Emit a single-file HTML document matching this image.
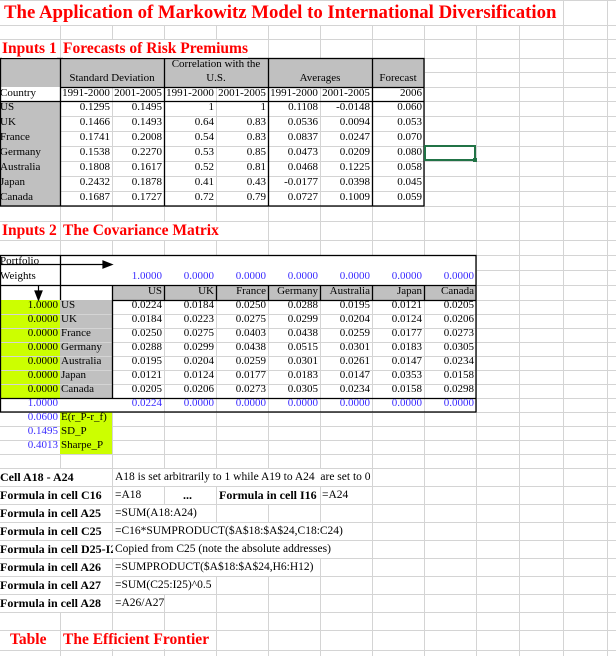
<!DOCTYPE html>
<html><head><meta charset="utf-8"><style>
body{margin:0;width:616px;height:656px;background:#fff;position:relative;overflow:hidden}
.c{position:absolute;height:15px;line-height:15px;font:11px "Liberation Serif",serif;white-space:nowrap;overflow:hidden;color:#000}
.r{text-align:right;padding-right:2px;box-sizing:border-box}
.m{text-align:center}
.l{padding-left:1px}
.b{color:#3a2bff}
.t{position:absolute;font:bold 15.5px "Liberation Serif",serif;color:#f00;white-space:nowrap;background:#fff;height:18px;line-height:18px}
.f{position:absolute;font:bold 12px "Liberation Serif",serif;white-space:nowrap;line-height:17px;height:17px;background:#fff}
.n{position:absolute;font:11.5px "Liberation Serif",serif;white-space:nowrap;line-height:17px;height:17px;background:#fff}
</style></head><body>
<svg width="616" height="656" style="position:absolute;left:0;top:0">
<g stroke="#d4d4d4" stroke-width="1">
<line x1="0" y1="0.5" x2="616" y2="0.5"/>
<path d="M60.5 25V656M112.5 25V656M164.5 25V656M216.5 25V656M268.5 25V656M320.5 25V656M372.5 25V656M424.5 25V656M476.5 25V656M519.5 25V656M563.5 0V656M607.5 0V656"/>
<path d="M0 25.5H616M0 39.5H616M0 58.5H616M0 72.5H616M0 87.5H616M0 101.5H616M0 116.5H616M0 131.5H616M0 146.5H616M0 161.5H616M0 176.5H616M0 191.5H616M0 206.5H616M0 221.5H616M0 240.5H616M0 255.5H616M0 270.5H616M0 285.5H616M0 300.5H616M0 314.5H616M0 328.5H616M0 342.5H616M0 356.5H616M0 370.5H616M0 384.5H616M0 398.5H616M0 412.5H616M0 426.5H616M0 440.5H616M0 454.5H616M0 468.5H616M0 486.5H616M0 504.5H616M0 522.5H616M0 540.5H616M0 558.5H616M0 576.5H616M0 594.5H616M0 612.5H616M0 630.5H616M0 650.5H616"/>
</g>
<rect x="0" y="58" width="424" height="29" fill="#c0c0c0"/>
<rect x="0" y="101" width="60" height="105" fill="#c0c0c0"/>
<rect x="0" y="87" width="60" height="14" fill="#fff"/>
<rect x="60" y="87" width="364" height="14" fill="#fff"/>
<rect x="60" y="101" width="364" height="105" fill="#fff"/>
<g stroke="#d4d4d4"><path d="M112.5 87V206M216.5 87V206M320.5 87V206M60 116.5H424M60 131.5H424M60 146.5H424M60 161.5H424M60 176.5H424M60 191.5H424"/></g>
<g stroke="#000" stroke-width="1.3" fill="none">
<rect x="0.5" y="58.5" width="423.5" height="147.5"/>
<path d="M60.5 58V206M164.5 58V206M268.5 58V206M372.5 58V206M60 87.5H424M0 101.5H424"/>
</g>
<rect x="0" y="255" width="476" height="45" fill="#fff"/>
<rect x="112" y="285" width="364" height="15" fill="#c0c0c0"/>
<rect x="0" y="300" width="60" height="98" fill="#ccff00"/>
<rect x="60" y="300" width="52" height="98" fill="#c0c0c0"/>
<rect x="112" y="300" width="364" height="112" fill="#fff"/>
<rect x="60" y="412" width="52" height="42" fill="#ccff00"/>
<rect x="0" y="398" width="112" height="14" fill="#fff"/>
<g stroke="#d4d4d4"><path d="M164.5 300V412M216.5 300V412M268.5 300V412M320.5 300V412M372.5 300V412M424.5 300V412M112 314.5H476M112 328.5H476M112 342.5H476M112 356.5H476M112 370.5H476M112 384.5H476M0 314.5H112M0 328.5H112M0 342.5H112M0 356.5H112M0 370.5H112M0 384.5H112"/></g>
<g stroke="#000" stroke-width="1.3" fill="none">
<rect x="0.5" y="255.5" width="475.5" height="156.5"/>
<path d="M60.5 255V300M0 285.5H476M112 300.5H476M112.5 285V398M0 398.5H476M164.5 285V300M216.5 285V300M268.5 285V300M320.5 285V300M372.5 285V300M424.5 285V300"/>
</g>
<g stroke="#000" stroke-width="1.2">
<line x1="0" y1="264.5" x2="104" y2="264.5"/><polygon points="112,264.5 103,261 103,268" fill="#000"/>
<line x1="38.5" y1="285" x2="38.5" y2="292"/><polygon points="38.5,300 35,291 42,291" fill="#000"/>
</g>
<rect x="425" y="146" width="50" height="14" fill="none" stroke="#217346" stroke-width="2"/>
<rect x="473" y="158" width="4" height="4" fill="#217346"/>
</svg>

<div class="t" style="left:4px;top:2px;font-size:18.8px;height:22px;line-height:22px">The Application of Markowitz Model to International Diversification</div>
<div class="t" style="left:2px;top:40px">Inputs 1</div>
<div class="t" style="left:63px;top:40px">Forecasts of Risk Premiums</div>

<div class="c m" style="left:60px;top:72px;width:104px">Standard Deviation</div>
<div class="c m" style="left:164px;top:58px;width:104px">Correlation with the</div>
<div class="c m" style="left:164px;top:72px;width:104px">U.S.</div>
<div class="c m" style="left:268px;top:72px;width:104px">Averages</div>
<div class="c m" style="left:372px;top:72px;width:52px">Forecast</div>
<div class="c" style="left:0;top:87px;width:60px">Country</div>
<div class="c m" style="left:60px;top:87px;width:52px">1991-2000</div>
<div class="c m" style="left:112px;top:87px;width:52px">2001-2005</div>
<div class="c m" style="left:164px;top:87px;width:52px">1991-2000</div>
<div class="c m" style="left:216px;top:87px;width:52px">2001-2005</div>
<div class="c m" style="left:268px;top:87px;width:52px">1991-2000</div>
<div class="c m" style="left:320px;top:87px;width:52px">2001-2005</div>
<div class="c r" style="left:372px;top:87px;width:52px">2006</div>

<div style="position:absolute;left:0;top:101px">
<div class="c" style="left:0;top:0">US</div><div class="c r" style="left:60px;top:0;width:52px">0.1295</div><div class="c r" style="left:112px;top:0;width:52px">0.1495</div><div class="c r" style="left:164px;top:0;width:52px">1</div><div class="c r" style="left:216px;top:0;width:52px">1</div><div class="c r" style="left:268px;top:0;width:52px">0.1108</div><div class="c r" style="left:320px;top:0;width:52px">-0.0148</div><div class="c r" style="left:372px;top:0;width:52px">0.060</div>
<div class="c" style="left:0;top:15px">UK</div><div class="c r" style="left:60px;top:15px;width:52px">0.1466</div><div class="c r" style="left:112px;top:15px;width:52px">0.1493</div><div class="c r" style="left:164px;top:15px;width:52px">0.64</div><div class="c r" style="left:216px;top:15px;width:52px">0.83</div><div class="c r" style="left:268px;top:15px;width:52px">0.0536</div><div class="c r" style="left:320px;top:15px;width:52px">0.0094</div><div class="c r" style="left:372px;top:15px;width:52px">0.053</div>
<div class="c" style="left:0;top:30px">France</div><div class="c r" style="left:60px;top:30px;width:52px">0.1741</div><div class="c r" style="left:112px;top:30px;width:52px">0.2008</div><div class="c r" style="left:164px;top:30px;width:52px">0.54</div><div class="c r" style="left:216px;top:30px;width:52px">0.83</div><div class="c r" style="left:268px;top:30px;width:52px">0.0837</div><div class="c r" style="left:320px;top:30px;width:52px">0.0247</div><div class="c r" style="left:372px;top:30px;width:52px">0.070</div>
<div class="c" style="left:0;top:45px">Germany</div><div class="c r" style="left:60px;top:45px;width:52px">0.1538</div><div class="c r" style="left:112px;top:45px;width:52px">0.2270</div><div class="c r" style="left:164px;top:45px;width:52px">0.53</div><div class="c r" style="left:216px;top:45px;width:52px">0.85</div><div class="c r" style="left:268px;top:45px;width:52px">0.0473</div><div class="c r" style="left:320px;top:45px;width:52px">0.0209</div><div class="c r" style="left:372px;top:45px;width:52px">0.080</div>
<div class="c" style="left:0;top:60px">Australia</div><div class="c r" style="left:60px;top:60px;width:52px">0.1808</div><div class="c r" style="left:112px;top:60px;width:52px">0.1617</div><div class="c r" style="left:164px;top:60px;width:52px">0.52</div><div class="c r" style="left:216px;top:60px;width:52px">0.81</div><div class="c r" style="left:268px;top:60px;width:52px">0.0468</div><div class="c r" style="left:320px;top:60px;width:52px">0.1225</div><div class="c r" style="left:372px;top:60px;width:52px">0.058</div>
<div class="c" style="left:0;top:75px">Japan</div><div class="c r" style="left:60px;top:75px;width:52px">0.2432</div><div class="c r" style="left:112px;top:75px;width:52px">0.1878</div><div class="c r" style="left:164px;top:75px;width:52px">0.41</div><div class="c r" style="left:216px;top:75px;width:52px">0.43</div><div class="c r" style="left:268px;top:75px;width:52px">-0.0177</div><div class="c r" style="left:320px;top:75px;width:52px">0.0398</div><div class="c r" style="left:372px;top:75px;width:52px">0.045</div>
<div class="c" style="left:0;top:90px">Canada</div><div class="c r" style="left:60px;top:90px;width:52px">0.1687</div><div class="c r" style="left:112px;top:90px;width:52px">0.1727</div><div class="c r" style="left:164px;top:90px;width:52px">0.72</div><div class="c r" style="left:216px;top:90px;width:52px">0.79</div><div class="c r" style="left:268px;top:90px;width:52px">0.0727</div><div class="c r" style="left:320px;top:90px;width:52px">0.1009</div><div class="c r" style="left:372px;top:90px;width:52px">0.059</div>
</div>

<div class="t" style="left:2px;top:222px">Inputs 2</div>
<div class="t" style="left:63px;top:222px">The Covariance Matrix</div>

<div class="c" style="left:0;top:255px">Portfolio</div>
<div class="c" style="left:0;top:270px">Weights</div>
<div class="c r b" style="left:112px;top:270px;width:52px">1.0000</div>
<div class="c r b" style="left:164px;top:270px;width:52px">0.0000</div>
<div class="c r b" style="left:216px;top:270px;width:52px">0.0000</div>
<div class="c r b" style="left:268px;top:270px;width:52px">0.0000</div>
<div class="c r b" style="left:320px;top:270px;width:52px">0.0000</div>
<div class="c r b" style="left:372px;top:270px;width:52px">0.0000</div>
<div class="c r b" style="left:424px;top:270px;width:52px">0.0000</div>
<div class="c r" style="left:112px;top:285px;width:52px">US</div>
<div class="c r" style="left:164px;top:285px;width:52px">UK</div>
<div class="c r" style="left:216px;top:285px;width:52px">France</div>
<div class="c r" style="left:268px;top:285px;width:52px">Germany</div>
<div class="c r" style="left:320px;top:285px;width:52px">Australia</div>
<div class="c r" style="left:372px;top:285px;width:52px">Japan</div>
<div class="c r" style="left:424px;top:285px;width:52px">Canada</div>

<div style="position:absolute;left:0;top:299px">
<div class="c r" style="left:0;top:0;width:60px">1.0000</div><div class="c l" style="left:60px;top:0">US</div>
<div class="c r" style="left:0;top:14px;width:60px">0.0000</div><div class="c l" style="left:60px;top:14px">UK</div>
<div class="c r" style="left:0;top:28px;width:60px">0.0000</div><div class="c l" style="left:60px;top:28px">France</div>
<div class="c r" style="left:0;top:42px;width:60px">0.0000</div><div class="c l" style="left:60px;top:42px">Germany</div>
<div class="c r" style="left:0;top:56px;width:60px">0.0000</div><div class="c l" style="left:60px;top:56px">Australia</div>
<div class="c r" style="left:0;top:70px;width:60px">0.0000</div><div class="c l" style="left:60px;top:70px">Japan</div>
<div class="c r" style="left:0;top:84px;width:60px">0.0000</div><div class="c l" style="left:60px;top:84px">Canada</div>

<div class="c r" style="left:112px;top:0;width:52px">0.0224</div><div class="c r" style="left:164px;top:0;width:52px">0.0184</div><div class="c r" style="left:216px;top:0;width:52px">0.0250</div><div class="c r" style="left:268px;top:0;width:52px">0.0288</div><div class="c r" style="left:320px;top:0;width:52px">0.0195</div><div class="c r" style="left:372px;top:0;width:52px">0.0121</div><div class="c r" style="left:424px;top:0;width:52px">0.0205</div>
<div class="c r" style="left:112px;top:14px;width:52px">0.0184</div><div class="c r" style="left:164px;top:14px;width:52px">0.0223</div><div class="c r" style="left:216px;top:14px;width:52px">0.0275</div><div class="c r" style="left:268px;top:14px;width:52px">0.0299</div><div class="c r" style="left:320px;top:14px;width:52px">0.0204</div><div class="c r" style="left:372px;top:14px;width:52px">0.0124</div><div class="c r" style="left:424px;top:14px;width:52px">0.0206</div>
<div class="c r" style="left:112px;top:28px;width:52px">0.0250</div><div class="c r" style="left:164px;top:28px;width:52px">0.0275</div><div class="c r" style="left:216px;top:28px;width:52px">0.0403</div><div class="c r" style="left:268px;top:28px;width:52px">0.0438</div><div class="c r" style="left:320px;top:28px;width:52px">0.0259</div><div class="c r" style="left:372px;top:28px;width:52px">0.0177</div><div class="c r" style="left:424px;top:28px;width:52px">0.0273</div>
<div class="c r" style="left:112px;top:42px;width:52px">0.0288</div><div class="c r" style="left:164px;top:42px;width:52px">0.0299</div><div class="c r" style="left:216px;top:42px;width:52px">0.0438</div><div class="c r" style="left:268px;top:42px;width:52px">0.0515</div><div class="c r" style="left:320px;top:42px;width:52px">0.0301</div><div class="c r" style="left:372px;top:42px;width:52px">0.0183</div><div class="c r" style="left:424px;top:42px;width:52px">0.0305</div>
<div class="c r" style="left:112px;top:56px;width:52px">0.0195</div><div class="c r" style="left:164px;top:56px;width:52px">0.0204</div><div class="c r" style="left:216px;top:56px;width:52px">0.0259</div><div class="c r" style="left:268px;top:56px;width:52px">0.0301</div><div class="c r" style="left:320px;top:56px;width:52px">0.0261</div><div class="c r" style="left:372px;top:56px;width:52px">0.0147</div><div class="c r" style="left:424px;top:56px;width:52px">0.0234</div>
<div class="c r" style="left:112px;top:70px;width:52px">0.0121</div><div class="c r" style="left:164px;top:70px;width:52px">0.0124</div><div class="c r" style="left:216px;top:70px;width:52px">0.0177</div><div class="c r" style="left:268px;top:70px;width:52px">0.0183</div><div class="c r" style="left:320px;top:70px;width:52px">0.0147</div><div class="c r" style="left:372px;top:70px;width:52px">0.0353</div><div class="c r" style="left:424px;top:70px;width:52px">0.0158</div>
<div class="c r" style="left:112px;top:84px;width:52px">0.0205</div><div class="c r" style="left:164px;top:84px;width:52px">0.0206</div><div class="c r" style="left:216px;top:84px;width:52px">0.0273</div><div class="c r" style="left:268px;top:84px;width:52px">0.0305</div><div class="c r" style="left:320px;top:84px;width:52px">0.0234</div><div class="c r" style="left:372px;top:84px;width:52px">0.0158</div><div class="c r" style="left:424px;top:84px;width:52px">0.0298</div>

<div class="c r b" style="left:0;top:98px;width:60px">1.0000</div>
<div class="c r b" style="left:112px;top:98px;width:52px">0.0224</div><div class="c r b" style="left:164px;top:98px;width:52px">0.0000</div><div class="c r b" style="left:216px;top:98px;width:52px">0.0000</div><div class="c r b" style="left:268px;top:98px;width:52px">0.0000</div><div class="c r b" style="left:320px;top:98px;width:52px">0.0000</div><div class="c r b" style="left:372px;top:98px;width:52px">0.0000</div><div class="c r b" style="left:424px;top:98px;width:52px">0.0000</div>
<div class="c r b" style="left:0;top:112px;width:60px">0.0600</div><div class="c l" style="left:60px;top:112px">E(r_P-r_f)</div>
<div class="c r b" style="left:0;top:126px;width:60px">0.1495</div><div class="c l" style="left:60px;top:126px">SD_P</div>
<div class="c r b" style="left:0;top:140px;width:60px">0.4013</div><div class="c l" style="left:60px;top:140px">Sharpe_P</div>
</div>

<div class="f" style="left:0;top:469px">Cell A18 - A24</div>
<div class="n" style="left:115px;top:469px">A18 is set arbitrarily to 1 while A19 to A24&nbsp; are set to 0</div>
<div class="f" style="left:0;top:487px">Formula in cell C16</div>
<div class="n" style="left:115px;top:487px">=A18</div>
<div class="f" style="left:183px;top:487px">...</div>
<div class="f" style="left:219px;top:487px">Formula in cell I16</div>
<div class="n" style="left:322px;top:487px">=A24</div>
<div class="f" style="left:0;top:505px">Formula in cell A25</div>
<div class="n" style="left:115px;top:505px">=SUM(A18:A24)</div>
<div class="f" style="left:0;top:523px">Formula in cell C25</div>
<div class="n" style="left:115px;top:523px">=C16*SUMPRODUCT($A$18:$A$24,C18:C24)</div>
<div class="f" style="left:0;top:541px;width:113px;overflow:hidden">Formula in cell D25-I25</div>
<div class="n" style="left:115px;top:541px">Copied from C25 (note the absolute addresses)</div>
<div class="f" style="left:0;top:559px">Formula in cell A26</div>
<div class="n" style="left:115px;top:559px">=SUMPRODUCT($A$18:$A$24,H6:H12)</div>
<div class="f" style="left:0;top:577px">Formula in cell A27</div>
<div class="n" style="left:115px;top:577px">=SUM(C25:I25)^0.5</div>
<div class="f" style="left:0;top:595px">Formula in cell A28</div>
<div class="n" style="left:115px;top:595px">=A26/A27</div>

<div class="t" style="left:10px;top:631px">Table</div>
<div class="t" style="left:63px;top:631px">The Efficient Frontier</div>
</body></html>
